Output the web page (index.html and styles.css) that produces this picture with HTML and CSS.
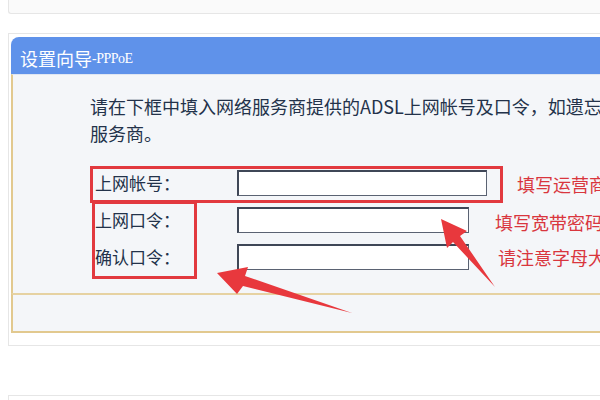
FILE: index.html
```html
<!DOCTYPE html>
<html lang="zh-CN">
	<head>
		<meta charset="utf-8">
		<title>设置向导-PPPoE</title>
		<link rel="stylesheet" href="styles.css">
	</head>
	<body>
		<div class="page">
			<div class="top-card"></div>

			<div class="wizard">
				<div class="panel-head">设置向导<span class="latin">-PPPoE</span></div>
				<div class="panel-body">
					<p class="intro">请在下框中填入网络服务商提供的ADSL上网帐号及口令，如遗忘请咨询网络</p>
					<p class="intro">服务商。</p>
					<form class="pppoe">
						<div class="row">
							<label for="account">上网帐号：</label>
							<input type="text" id="account" class="wide">
						</div>
						<div class="row">
							<label for="password">上网口令：</label>
							<input type="password" id="password">
						</div>
						<div class="row">
							<label for="confirm">确认口令：</label>
							<input type="password" id="confirm">
						</div>
					</form>
				</div>
				<div class="panel-foot"></div>
			</div>

			<div class="bottom-card"></div>
		</div>

		<!-- red markup drawn over the screenshot -->
		<div class="mark mark-account"></div>
		<div class="mark mark-labels"></div>
		<div class="note note-1">填写运营商提供的帐号</div>
		<div class="note note-2">填写宽带密码</div>
		<div class="note note-3">请注意字母大小写</div>
		<svg class="arrows" width="600" height="400" viewBox="0 0 600 400">
			<polygon points="217,273 248,267 245,276 352,313 243,286 237,294"/>
			<polygon points="441,219 467,231 460,236 495,287 453,242 447,248"/>
		</svg>
	</body>
</html>
```

FILE: styles.css
```css
body { margin: 0; background: #fff; font-family: "Noto Sans CJK SC", "Noto Sans", sans-serif; color: #23324a; position: relative; width: 600px; height: 400px; overflow: hidden; }

.page { padding-left: 8px; }

.top-card { height: 13px; background: #fafafa; border: 1px solid #e6e6e6; border-top: none; border-right: none; border-bottom-left-radius: 3px; margin-bottom: 19px; }

.wizard { border: 1px solid #e6e6e6; border-right: none; padding: 3px 0 12px 2px; }

.panel-head { height: 37px; box-sizing: border-box; padding: 5px 0 0 9px; display: flex; align-items: center; background: #5f92ea; color: #fff; font-size: 18px; border-top-left-radius: 8px; }

.panel-head .latin { font-family: "Liberation Serif", serif; font-size: 14px; letter-spacing: -0.5px; margin-top: 2px; }

.panel-body { height: 219px; box-sizing: border-box; padding: 18px 0 0 77px; background: #f4f6f9; border-left: 2px solid #e2c98f; border-top: 1px solid #dfe6f2; }

.intro { margin: 0; font-size: 18px; line-height: 27px; white-space: nowrap; }

.pppoe { margin: 17px 0 0 5px; }

.row { display: flex; align-items: center; height: 37px; }

.row label { width: 142px; font-size: 17px; }

.row input { box-sizing: border-box; width: 232px; height: 26px; margin: 0; padding: 0 4px; background: #fff; border: 1px solid #5a6272; border-top: 2px solid #3f4757; border-left: 2px solid #3f4757; }

.row input.wide { width: 250px; }

.panel-foot { height: 40px; box-sizing: border-box; background: #f4f6f9; border-top: 2px solid #e6d2a2; border-bottom: 2px solid #e2c98f; border-left: 2px solid #e2c98f; }

.bottom-card { margin-top: 49px; height: 20px; border-top: 1px solid #e6e6e6; border-left: 1px solid #e6e6e6; }

.mark { position: absolute; border: 3px solid #e2393f; box-sizing: border-box; }

.mark-account { left: 90px; top: 166px; width: 413px; height: 37px; }

.mark-labels { left: 92px; top: 201px; width: 105px; height: 78px; }

.note { position: absolute; font-size: 18px; color: #d9363e; white-space: nowrap; line-height: 24px; }

.note-1 { left: 517px; top: 172px; }

.note-2 { left: 495px; top: 210px; }

.note-3 { left: 498px; top: 245px; }

.arrows { position: absolute; left: 0; top: 0; }

.arrows polygon { fill: #e8383d; }
```
